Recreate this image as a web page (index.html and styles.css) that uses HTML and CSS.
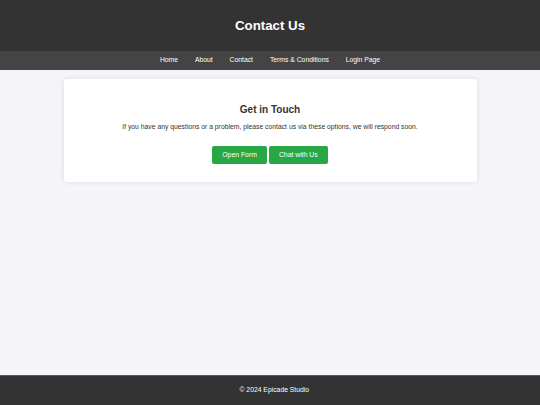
FILE: index.html
```html
<!DOCTYPE html>
<html lang="en">
<head>
<meta charset="utf-8">
<title>Contact Us</title>
<link rel="stylesheet" href="styles.css">
</head>
<body>
<header class="site-header">
  <h1 class="site-title">Contact Us</h1>
</header>
<nav class="site-nav">
  <a href="#" class="nav-link">Home</a>
  <a href="#" class="nav-link">About</a>
  <a href="#" class="nav-link">Contact</a>
  <a href="#" class="nav-link">Terms &amp; Conditions</a>
  <a href="#" class="nav-link">Login Page</a>
</nav>
<main class="content">
  <section class="card">
    <h2 class="card-title">Get in Touch</h2>
    <p class="card-text">If you have any questions or a problem, please contact us via these options, we will respond soon.</p>
    <div class="actions">
      <button class="btn">Open Form</button>
      <button class="btn">Chat with Us</button>
    </div>
  </section>
</main>
<footer class="site-footer">
  <p class="footer-text">&copy; 2024 Epicade Studio</p>
</footer>
</body>
</html>
```

FILE: styles.css
```css
* { box-sizing: border-box; }
html, body { height: 100%; }
body {
  margin: 0;
  font-family: "Liberation Sans", Arial, sans-serif;
  background: #f4f4f9;
  color: #333;
  display: flex;
  flex-direction: column;
  min-height: 100vh;
}
.site-header {
  background: #333;
  color: #fff;
  height: 51px;
  display: flex;
  align-items: center;
  justify-content: center;
}
.site-title {
  margin: 0;
  font-size: 13.3px;
  font-weight: bold;
  line-height: 1;
}
.site-nav {
  background: #444;
  height: 19px;
  display: flex;
  align-items: center;
  justify-content: center;
  gap: 16.9px;
}
.nav-link {
  color: #fff;
  text-decoration: none;
  font-size: 6.8px;
  line-height: 1;
}
.content {
  flex: 1;
  padding-top: 8.5px;
}
.card {
  width: 413px;
  margin: 0 auto;
  background: #fff;
  border-radius: 3px;
  box-shadow: 0 0 5px rgba(0, 0, 0, 0.1);
  padding: 25.4px 17px 17.2px;
  text-align: center;
}
.card-title {
  margin: 0;
  font-size: 10px;
  line-height: 11.5px;
  font-weight: bold;
  color: #333;
}
.card-text {
  margin: 8px 0 0;
  font-size: 6.8px;
  line-height: 7.8px;
  color: #333;
}
.actions {
  margin-top: 15.2px;
  display: flex;
  justify-content: center;
  gap: 2px;
}
.btn {
  font-family: inherit;
  font-size: 6.85px;
  line-height: 8px;
  background: #28a745;
  color: #fff;
  border: none;
  border-radius: 2px;
  padding: 5px 10px;
  height: 18px;
  cursor: pointer;
}
.site-footer {
  background: #333;
  color: #fff;
  height: 30px;
  border-top: 1px solid #5a5a5a;
  padding-left: 8.6px;
  display: flex;
  align-items: center;
  justify-content: center;
}
.footer-text {
  margin: 0;
  font-size: 6.8px;
  line-height: 1;
}
```
